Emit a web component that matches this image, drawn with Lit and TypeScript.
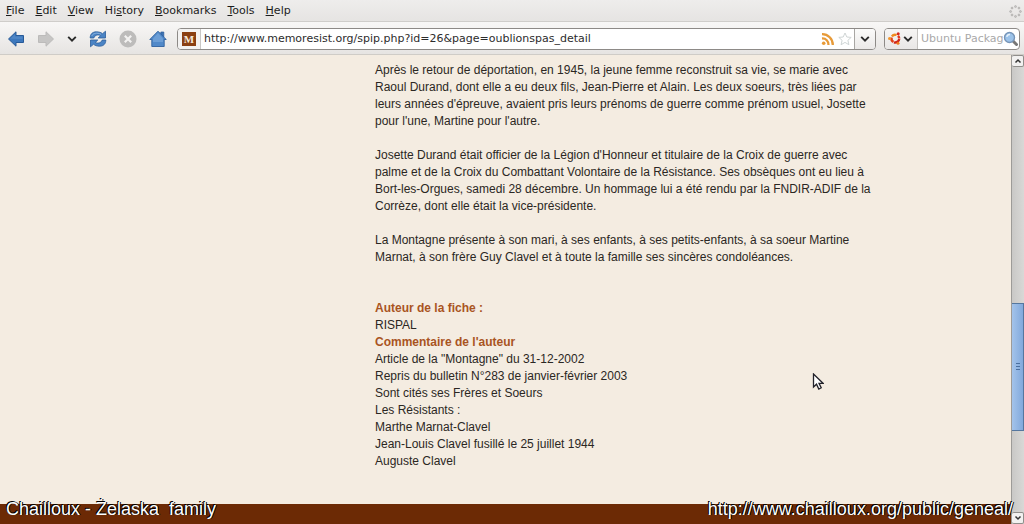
import { LitElement, html, svg, css } from "lit";
import { customElement } from "lit/decorators.js";

const chevron = html`<svg class="chevron" width="10" height="8" viewBox="0 0 10 8" aria-hidden="true">
  <path d="M1.2 1.8 5 5.6 8.8 1.8" fill="none" stroke="#2a2a2a" stroke-width="1.9" />
</svg>`;

@customElement("menu-bar")
export class MenuBar extends LitElement {
  static styles = css`
    :host {
      display: flex;
      align-items: center;
      justify-content: space-between;
      height: 20px;
      padding: 1px 2px 0 6px;
      background: linear-gradient(#eeedec, #e6e4e2);
      border-bottom: 1px solid #cfcdca;
    }
    nav {
      display: flex;
      gap: 11px;
    }
    button {
      padding: 0;
      border: 0;
      background: none;
      color: #1c1c1c;
      font: 11px/16px "DejaVu Sans", sans-serif;
    }
    .key {
      text-decoration: underline;
      text-underline-offset: 1px;
    }
  `;

  private items = [
    ["", "F", "ile"],
    ["", "E", "dit"],
    ["", "V", "iew"],
    ["Hi", "s", "tory"],
    ["", "B", "ookmarks"],
    ["", "T", "ools"],
    ["", "H", "elp"],
  ];

  render() {
    return html`
      <nav aria-label="Menu">
        ${this.items.map(
          ([a, key, b]) => html`<button type="button">${a}<span class="key">${key}</span>${b}</button>`
        )}
      </nav>
      <svg width="13" height="13" viewBox="0 0 13 13" aria-hidden="true">
        ${[0, 45, 90, 135, 180, 225, 270, 315].map(
          (a) => svg`<circle cx="6.5" cy="1.6" r="1" fill="#c9c7c5" stroke="#a3a1a0" stroke-width=".5" transform="rotate(${a} 6.5 6.5)" />`
        )}
      </svg>
    `;
  }
}

@customElement("nav-bar")
export class NavBar extends LitElement {
  static styles = css`
    :host {
      display: flex;
      align-items: center;
      gap: 8px;
      height: 31px;
      padding: 1px 4px 0 7px;
      background: linear-gradient(#f8f7f6, #e6e4e2);
      border-bottom: 1px solid #cfccc7;
    }
    button {
      display: grid;
      place-items: center;
      padding: 0;
      border: 0;
      background: none;
    }
    svg {
      display: block;
    }
    .tools {
      display: flex;
      align-items: center;
      gap: 12px;
      margin-right: 2px;
    }
    .field {
      display: flex;
      box-sizing: border-box;
      height: 22px;
      min-width: 0;
      overflow: hidden;
      background: #fff;
      border: 1px solid #8d8a87;
      border-radius: 4px;
    }
    .address {
      flex: 1;
    }
    .search {
      width: 136px;
    }
    .site {
      display: grid;
      place-items: center;
      width: 22px;
      background: #f3f2f1;
      border-right: 1px solid #c9c7c5;
    }
    .badge {
      width: 14px;
      height: 14px;
      background: #8a3f12;
      color: #f6e9dc;
      font: bold 11px/14px "Liberation Serif", serif;
      text-align: center;
    }
    .drop {
      width: 21px;
      background: linear-gradient(#fbfbfa, #ebe9e8);
      border-left: 1px solid #a8a6a3;
    }
    .engine {
      display: flex;
      align-items: center;
      gap: 2px;
      padding: 0 4px 0 3px;
      background: linear-gradient(#f6f5f4, #e9e7e6);
      border-right: 1px solid #c4c2bf;
    }
    .status {
      display: flex;
      align-items: center;
      gap: 3px;
      padding-right: 2px;
    }
    input {
      flex: 1;
      min-width: 0;
      padding: 0 0 0 3px;
      border: 0;
      outline: 0;
      background: none;
      color: #2c2c2c;
      font: 11px/20px "DejaVu Sans", sans-serif;
    }
    input::placeholder {
      color: #a9a9a9;
      opacity: 1;
    }
  `;

  render() {
    return html`
      <div class="tools">
        <button type="button" aria-label="Back">
          <svg width="18" height="18" viewBox="0 0 18 18">
            <path d="M1.500 9 9 1.800V5.500h7.500v7H9v3.700z" fill="#3d78bd" stroke="#285a98" />
            <path d="M3.200 8.800 8 4.200v2.300h7.500V9z" fill="#4f86c6" />
          </svg>
        </button>
        <button type="button" aria-label="Forward">
          <svg width="18" height="18" viewBox="0 0 18 18">
            <path d="M16.500 9 9 1.800V5.500H1.500v7H9v3.700z" fill="#c6c5c4" stroke="#bcbbba" />
          </svg>
        </button>
        <button type="button" aria-label="Recent pages">${chevron}</button>
        <button type="button" aria-label="Reload">
          <svg width="18" height="18" viewBox="0 0 18 18">
            <path d="M1.200 8C1.200 4 3.500 1.800 7.500 1.800c2.500 0 4.500.7 6 1.900L16.500 1.200V8H9.200l2.400-2.400C9 4.200 5.800 5 4.800 8z" fill="#4b84c5" stroke="#2b5d9b" stroke-width=".8" />
            <path d="M16.800 10c0 4-2.300 6.200-6.300 6.200-2.500 0-4.500-.7-6-1.900L1.500 16.800V10h7.300l-2.400 2.400c2.600 1.400 5.800.6 6.800-2.400z" fill="#4b84c5" stroke="#2b5d9b" stroke-width=".8" />
            <path d="M2.800 6C3.800 3.300 8 2.300 12 4.200" fill="none" stroke="#8fb6e0" stroke-width=".9" />
          </svg>
        </button>
        <button type="button" aria-label="Stop">
          <svg width="18" height="18" viewBox="0 0 18 18">
            <circle cx="9" cy="9" r="8.500" fill="#bdbcbb" />
            <path d="m5.800 5.800 6.400 6.400m0-6.400-6.400 6.400" stroke="#f3f2f1" stroke-width="2.200" />
          </svg>
        </button>
        <button type="button" aria-label="Home">
          <svg width="18" height="18" viewBox="0 0 18 18">
            <path d="M11.800 2h3v5h-3z" fill="#3d73b3" stroke="#2b5d9b" stroke-width=".7" />
            <path d="M9 1.200.8 9.500h2v7h12.400v-7h2z" fill="#5189c9" stroke="#2f619f" stroke-width=".9" />
            <path d="M9 3 4 8.500V12h10V8.500z" fill="#77a6dc" opacity=".7" />
          </svg>
        </button>
      </div>
      <div class="field address">
        <span class="site"><span class="badge">M</span></span>
        <input type="text" aria-label="Address" value="http://www.memoresist.org/spip.php?id=26&amp;page=oublionspas_detail" />
        <span class="status">
          <svg width="14" height="14" viewBox="0 0 14 14" aria-hidden="true">
            <g fill="none" stroke="#e79a38" stroke-width="2.300">
              <path d="M1 6.500a6 6 0 0 1 6.500 6.500" />
              <path d="M1 2.200A10.600 10.600 0 0 1 11.800 13" />
            </g>
            <circle cx="2.700" cy="11.300" r="1.800" fill="#e79a38" />
          </svg>
          <svg width="14" height="14" viewBox="0 0 14 14" aria-hidden="true">
            <path d="m7 1 1.800 4 4.400.4-3.300 2.900 1 4.400L7 10.400l-3.900 2.300 1-4.400L.8 5.400 5.200 5z" fill="#fff" stroke="#c9d0d0" stroke-width=".9" />
          </svg>
        </span>
        <button type="button" class="drop" aria-label="Address history">${chevron}</button>
      </div>
      <div class="field search">
        <button type="button" class="engine" aria-label="Search engine">
          <svg width="13" height="13" viewBox="0 0 13 13">
            <g fill="none" stroke-width="2.400">
              <path d="M8.600 3A4 4 0 0 0 3.900 4.500" stroke="#f08a1d" />
              <path d="M3.600 5.500A4 4 0 0 0 5.500 10" stroke="#e3401c" />
              <path d="M6 10.300A4 4 0 0 0 11.200 7" stroke="#d0261a" />
              <path d="M11.200 6.500A4 4 0 0 0 10 3.800" stroke="#e4381c" />
            </g>
            <circle cx="1.500" cy="6.500" r="1.500" fill="#f3962a" />
            <circle cx="10.200" cy="1.700" r="1.500" fill="#d5281b" />
            <circle cx="10" cy="11.300" r="1.500" fill="#ef7b1d" />
          </svg>
          ${chevron}
        </button>
        <input type="text" aria-label="Search" placeholder="Ubuntu Packages" />
        <button type="button" aria-label="Go">
          <svg width="16" height="16" viewBox="0 0 16 16">
            <path d="m9.500 9.500 4 4" stroke="#777" stroke-width="3" stroke-linecap="round" />
            <circle cx="6.500" cy="6.500" r="5" fill="#9cc3ea" stroke="#7795b8" stroke-width="1.400" />
            <path d="M3.800 6A3 3 0 0 1 7 3.500" fill="none" stroke="#e6f2fc" stroke-width="1.300" />
          </svg>
        </button>
      </div>
    `;
  }
}

@customElement("scroll-bar")
export class ScrollBar extends LitElement {
  static styles = css`
    :host {
      display: grid;
      grid-template-rows: 12px 235fr 128fr 81fr 12px;
      box-sizing: border-box;
      width: 13px;
      background: linear-gradient(90deg, #c9c8c6, #d9d8d6);
      border-left: 1px solid #9d9b98;
    }
    button {
      display: grid;
      place-items: center;
      padding: 0;
      border: 1px solid #908e8b;
      border-left: 0;
      border-radius: 2px;
      background: #f2f1f0;
    }
    .thumb {
      display: grid;
      place-items: center;
      grid-row: 3;
      background: linear-gradient(90deg, #a3c3ea, #82a9dc);
      border: 1px solid #55779f;
      border-left: 0;
    }
    .down {
      grid-row: 5;
    }
    svg {
      display: block;
    }
  `;

  render() {
    return html`
      <button type="button" aria-label="Scroll up">
        <svg width="8" height="6" viewBox="0 0 8 6"><path d="M1.500 4.500 4 2l2.500 2.500" fill="none" stroke="#333" stroke-width="1.500" /></svg>
      </button>
      <div class="thumb">
        <svg width="6" height="7" viewBox="0 0 6 7"><path d="M1 .5h4M1 3.500h4M1 6.500h4" stroke="#4a6f9f" /></svg>
      </div>
      <button type="button" class="down" aria-label="Scroll down">
        <svg width="8" height="6" viewBox="0 0 8 6"><path d="M1.500 1.500 4 4l2.500-2.500" fill="none" stroke="#333" stroke-width="1.500" /></svg>
      </button>
    `;
  }
}

@customElement("app-root")
export class AppRoot extends LitElement {
  static styles = css`
    :host {
      display: flex;
      flex-direction: column;
      position: relative;
      height: 100vh;
      overflow: hidden;
      background: #f4ece1;
    }
    .view {
      flex: 1;
      display: flex;
      min-height: 0;
    }
    .page {
      flex: 1;
      display: flex;
      flex-direction: column;
      min-width: 0;
      color: #2b2723;
      font: 12px/17px "Liberation Sans", Arial, sans-serif;
    }
    article {
      flex: 1;
      padding: 7px 0 0 375px;
      white-space: nowrap;
    }
    p {
      margin: 0 0 17px;
    }
    h2 {
      margin: 0;
      color: #a9541f;
      font: inherit;
      font-weight: bold;
    }
    .notes {
      margin-top: 34px;
    }
    .notes p {
      margin: 0;
    }
    .foot {
      height: 20px;
      background: #6c2a05;
    }
    .caption {
      position: absolute;
      inset: auto 11px 3px 6px;
      display: flex;
      justify-content: space-between;
      color: #fff;
      font: 18px/24px "Liberation Sans", Arial, sans-serif;
      text-shadow: -1px -1px 0 #000, 1px 0 0 #000;
      white-space: pre;
    }
    .caption a {
      color: inherit;
      text-decoration: none;
    }
    .pointer {
      position: absolute;
      left: 812px;
      top: 373px;
    }
  `;

  render() {
    return html`
      <menu-bar></menu-bar>
      <nav-bar></nav-bar>
      <div class="view">
        <main class="page">
          <article>
            <p>
              Après le retour de déportation, en 1945, la jeune femme reconstruit sa vie, se marie avec<br />
              Raoul Durand, dont elle a eu deux fils, Jean-Pierre et Alain. Les deux soeurs, très liées par<br />
              leurs années d'épreuve, avaient pris leurs prénoms de guerre comme prénom usuel, Josette<br />
              pour l'une, Martine pour l'autre.
            </p>
            <p>
              Josette Durand était officier de la Légion d'Honneur et titulaire de la Croix de guerre avec<br />
              palme et de la Croix du Combattant Volontaire de la Résistance. Ses obsèques ont eu lieu à<br />
              Bort-les-Orgues, samedi 28 décembre. Un hommage lui a été rendu par la FNDIR-ADIF de la<br />
              Corrèze, dont elle était la vice-présidente.
            </p>
            <p>
              La Montagne présente à son mari, à ses enfants, à ses petits-enfants, à sa soeur Martine<br />
              Marnat, à son frère Guy Clavel et à toute la famille ses sincères condoléances.
            </p>
            <section class="notes">
              <h2>Auteur de la fiche :</h2>
              <p>RISPAL</p>
              <h2>Commentaire de l'auteur</h2>
              <p>
                Article de la "Montagne" du 31-12-2002<br />
                Repris du bulletin N°283 de janvier-février 2003<br />
                Sont cités ses Frères et Soeurs<br />
                Les Résistants :<br />
                Marthe Marnat-Clavel<br />
                Jean-Louis Clavel fusillé le 25 juillet 1944<br />
                Auguste Clavel
              </p>
            </section>
          </article>
          <div class="foot"></div>
        </main>
        <scroll-bar></scroll-bar>
      </div>
      <div class="caption"><span>Chailloux - Żelaska  family</span><a href="http://www.chailloux.org/public/geneal/">http://www.chailloux.org/public/geneal/</a></div>
      <svg class="pointer" width="12" height="18" viewBox="0 0 12 18" aria-hidden="true">
        <path d="M1.500 1v13l3-2.800 2.300 4.800 2.400-1.200L7 10.300h4z" fill="#fff" stroke="#22222a" stroke-width="1.300" />
      </svg>
    `;
  }
}
